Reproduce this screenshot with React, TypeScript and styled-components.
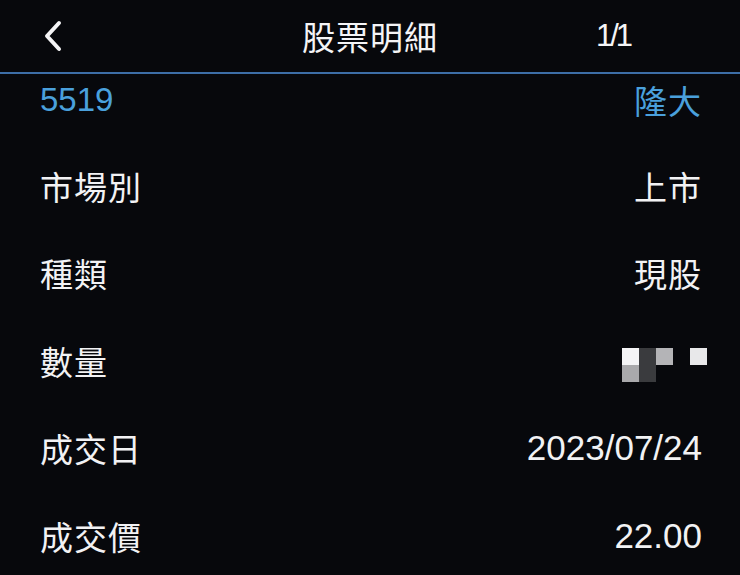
import styled, { createGlobalStyle } from 'styled-components'

const GlobalStyle = createGlobalStyle`
  html, body {
    margin: 0;
    padding: 0;
    background: #07080c;
  }
  body {
    font-family: "Liberation Sans", "Noto Sans CJK TC", sans-serif;
    color: #f2f2f4;
  }
`

const Page = styled.div`
  width: 740px;
  height: 575px;
  overflow: hidden;
  background: #07080c;
`

const Header = styled.header`
  height: 72px;
  display: grid;
  grid-template-columns: 1fr auto 1fr;
  align-items: center;
  border-bottom: 2px solid #3d6ea8;
  box-sizing: content-box;
`

const BackButton = styled.button`
  justify-self: start;
  margin-left: 41px;
  padding: 0;
  width: 24px;
  height: 34px;
  border: none;
  background: none;
  display: flex;
  align-items: center;
  justify-content: center;
  cursor: pointer;
`

const Title = styled.h1`
  margin: 0;
  font-family: "Noto Sans CJK TC", sans-serif;
  font-size: 33px;
  font-weight: 400;
  letter-spacing: 1px;
  color: #f4f4f6;
`

const Pager = styled.div`
  justify-self: end;
  margin-right: 110px;
  font-size: 31px;
  color: #f4f4f6;
  letter-spacing: -3px;
`

const StockRow = styled.div`
  height: 52px;
  padding: 0 38px 0 40px;
  display: flex;
  align-items: center;
  justify-content: space-between;
  color: #4aa0dc;
  font-size: 33px;
`

const StockName = styled.span`
  font-family: "Noto Sans CJK TC", sans-serif;
  font-size: 33px;
  letter-spacing: 1px;
`

const List = styled.div`
  padding-top: 16px;
  display: flex;
  flex-direction: column;
`

const Row = styled.div`
  height: 87.5px;
  padding: 0 38px 0 40px;
  display: flex;
  align-items: center;
  justify-content: space-between;
`

const Label = styled.span`
  font-family: "Noto Sans CJK TC", sans-serif;
  font-size: 33px;
  letter-spacing: 1px;
`

const Value = styled.span<{ $cjk?: boolean }>`
  font-family: ${({ $cjk }) =>
    $cjk ? '"Noto Sans CJK TC", sans-serif' : '"Liberation Sans", "Noto Sans CJK TC", sans-serif'};
  font-size: ${({ $cjk }) => ($cjk ? '33px' : '35px')};
  letter-spacing: ${({ $cjk }) => ($cjk ? '1px' : '0')};
`

const Mosaic = styled.div`
  display: grid;
  grid-template-columns: repeat(5, 17px);
  grid-template-rows: repeat(2, 17px);
  margin-right: -5px;
  margin-top: 8px;
`

const Cell = styled.div<{ $c: string }>`
  background: ${({ $c }) => $c};
`

const mosaic = [
  '#f4f4f6', '#3a3b3e', '#b4b4b7', 'transparent', '#e8e8ea',
  '#a9a9ac', '#3a3b3e', 'transparent', 'transparent', 'transparent',
]

const rows: { label: string; value?: string; cjk?: boolean }[] = [
  { label: '市場別', value: '上市', cjk: true },
  { label: '種類', value: '現股', cjk: true },
  { label: '數量' },
  { label: '成交日', value: '2023/07/24' },
  { label: '成交價', value: '22.00' },
]

export default function App() {
  return (
    <Page>
      <GlobalStyle />
      <Header>
        <BackButton aria-label="back">
          <svg width="20" height="32" viewBox="0 0 20 32">
            <polyline
              points="16,3 4,16 16,29"
              fill="none"
              stroke="#f4f4f6"
              strokeWidth="4"
              strokeLinecap="round"
              strokeLinejoin="round"
            />
          </svg>
        </BackButton>
        <Title>股票明細</Title>
        <Pager>1/1</Pager>
      </Header>
      <StockRow>
        <span>5519</span>
        <StockName>隆大</StockName>
      </StockRow>
      <List>
        {rows.map(r => (
          <Row key={r.label}>
            <Label>{r.label}</Label>
            {r.value ? (
              <Value $cjk={r.cjk}>{r.value}</Value>
            ) : (
              <Mosaic>
                {mosaic.map((c, i) => (
                  <Cell key={i} $c={c} />
                ))}
              </Mosaic>
            )}
          </Row>
        ))}
      </List>
    </Page>
  )
}
